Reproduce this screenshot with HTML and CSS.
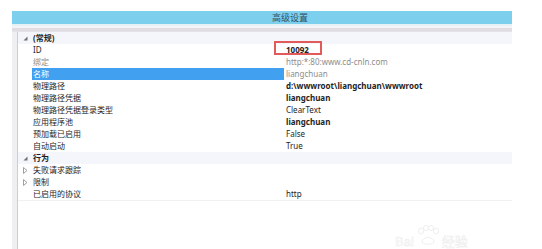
FILE: index.html
```html
<!DOCTYPE html>
<html lang="zh-CN">
<head>
<meta charset="utf-8">
<title>高级设置</title>
<link rel="stylesheet" href="styles.css">
</head>
<body>
<div class="window">
  <div class="titlebar"><span class="title">高级设置</span></div>
  <div class="strip"></div>
  <div class="panel">
    <div class="grid">
      <div class="row cat"><span class="tw"><svg width="5" height="5" viewBox="0 0 5 5"><polygon points="4.5,0.5 4.5,4.5 0.5,4.5" fill="#707070"/></svg></span><span class="name">(常规)</span><span class="val"></span></div>
      <div class="row"><span class="tw"></span><span class="name">ID</span><span class="val b"><span class="mark"></span>10092</span></div>
      <div class="row"><span class="tw"></span><span class="name g">绑定</span><span class="val g">http:*:80:www.cd-cnln.com</span></div>
      <div class="row sel"><span class="tw"></span><span class="name">名称</span><span class="val g">liangchuan</span></div>
      <div class="row"><span class="tw"></span><span class="name">物理路径</span><span class="val b">d:\wwwroot\liangchuan\wwwroot</span></div>
      <div class="row"><span class="tw"></span><span class="name">物理路径凭据</span><span class="val b">liangchuan</span></div>
      <div class="row"><span class="tw"></span><span class="name">物理路径凭据登录类型</span><span class="val">ClearText</span></div>
      <div class="row"><span class="tw"></span><span class="name">应用程序池</span><span class="val b">liangchuan</span></div>
      <div class="row"><span class="tw"></span><span class="name">预加载已启用</span><span class="val">False</span></div>
      <div class="row"><span class="tw"></span><span class="name">自动启动</span><span class="val">True</span></div>
      <div class="row cat"><span class="tw"><svg width="5" height="5" viewBox="0 0 5 5"><polygon points="4.5,0.5 4.5,4.5 0.5,4.5" fill="#707070"/></svg></span><span class="name">行为</span><span class="val"></span></div>
      <div class="row"><span class="tw"><svg width="5" height="7" viewBox="0 0 5 7"><polygon points="0.5,0.5 4,3.5 0.5,6.5" fill="none" stroke="#a0a0a0" stroke-width="1"/></svg></span><span class="name">失败请求跟踪</span><span class="val"></span></div>
      <div class="row"><span class="tw"><svg width="5" height="7" viewBox="0 0 5 7"><polygon points="0.5,0.5 4,3.5 0.5,6.5" fill="none" stroke="#a0a0a0" stroke-width="1"/></svg></span><span class="name">限制</span><span class="val"></span></div>
      <div class="row"><span class="tw"></span><span class="name">已启用的协议</span><span class="val">http</span></div>
    </div>
  </div>
</div>
<div class="watermark">
  <span class="wm-text">Bai</span>
  <svg class="paw" width="26" height="20" viewBox="0 0 26 20">
    <g fill="none" stroke="#efefef" stroke-width="1">
      <ellipse cx="6" cy="6" rx="2.5" ry="3"/>
      <ellipse cx="11" cy="3" rx="2.5" ry="2.6"/>
      <ellipse cx="16" cy="3" rx="2.5" ry="2.6"/>
      <ellipse cx="21" cy="6" rx="2.5" ry="3"/>
      <path d="M7 17 C7 11 19 11 19 17 C19 20 7 20 7 17 Z"/>
    </g>
  </svg>
  <span class="wm-text">经验</span>
</div>
</body>
</html>
```

FILE: styles.css
```css
html, body {
  margin: 0;
  padding: 0;
  background: #ffffff;
}

body {
  font-family: "Noto Sans", "Noto Sans CJK SC", sans-serif;
  font-size: 8px;
  color: #1e1e1e;
  position: relative;
  height: 249px;
  overflow: hidden;
}

.window {
  margin: 11px 0 0 12px;
  width: 500px;
  height: 238px;
  display: flex;
  flex-direction: column;
  background: #efeef1;
}

.titlebar {
  height: 13px;
  flex: none;
  background: #7dcfee;
  font-family: "Noto Sans CJK SC", sans-serif;
  font-size: 9px;
  line-height: 13px;
  color: #34505e;
  padding-left: 260px;
}

.strip {
  height: 8px;
  flex: none;
  background: linear-gradient(#e6f1f7 0 2px, #f4f3f5 2px 4px, #dfdde2 4px 7px, #e4e3e7 7px 8px);
}

.panel {
  flex: 1;
  margin-left: 5px;
  border-left: 1px solid #cfccd2;
  background: #ffffff;
}

.grid {
  border-bottom: 1px solid #f0f0f2;
}

.row {
  display: grid;
  grid-template-columns: 14px 252px 1fr;
  height: 12px;
  line-height: 12px;
}

.cat {
  background: #f5f6fb;
  font-weight: bold;
}

.tw {
  display: flex;
  align-items: center;
  justify-content: center;
  padding-left: 1px;
}

.name {
  padding-left: 1px;
  white-space: nowrap;
}

.val {
  position: relative;
  padding-left: 2px;
  white-space: nowrap;
}

.g {
  color: #8d8d8d;
}

.b {
  font-weight: bold;
}

.sel .name {
  background: #41a0f0;
  color: #ffffff;
}

.mark {
  position: absolute;
  left: -10px;
  top: -3px;
  width: 48px;
  height: 14px;
  box-sizing: border-box;
  border: 2px solid #e25a5a;
}

.watermark {
  position: absolute;
  left: 395px;
  top: 225px;
  display: flex;
  align-items: flex-end;
  gap: 1px;
}

.wm-text {
  font-family: "Liberation Sans", "Noto Sans CJK SC", sans-serif;
  font-size: 13px;
  line-height: 13px;
  color: #ffffff;
  -webkit-text-stroke: 0.5px #ececec;
}

.paw {
  display: block;
  margin-bottom: 3px;
}
```
